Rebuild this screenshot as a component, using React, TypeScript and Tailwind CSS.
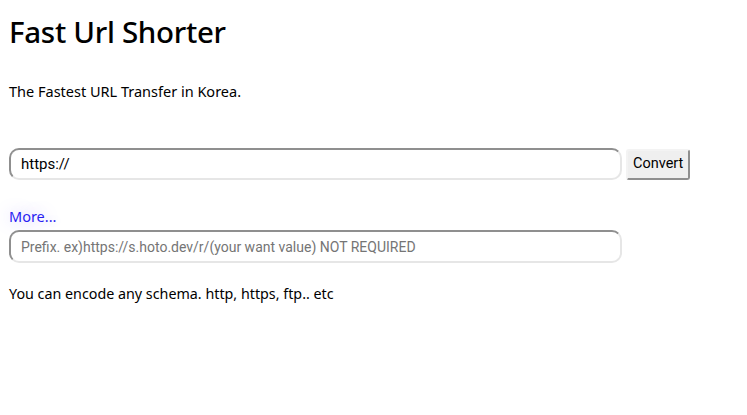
export default function App() {
  return (
    <div className="min-h-[415px] bg-white px-[9px] text-black [font-family:'Noto_Sans',sans-serif]">
      <h1 className="pt-[14px] text-[29.5px] leading-[36px] font-medium tracking-[-0.3px]">Fast Url Shorter</h1>
      <p className="mt-[32px] text-[14.5px] leading-[18px]">The Fastest URL Transfer in Korea.</p>

      <div className="mt-[48px] flex items-center gap-[4px]">
        <input
          defaultValue="https://"
          className="h-[32px] w-[613px] rounded-[10px] border-2 border-t-[#8f8f8f] border-l-[#8f8f8f] border-r-[#e6e6e6] border-b-[#e6e6e6] bg-white px-[10px] text-[15px] text-black outline-none [font-family:Roboto,sans-serif]"
        />
        <button className="h-[31px] rounded-[3px] border-2 border-t-[#f3f3f3] border-l-[#f3f3f3] border-r-[#8f8f8f] border-b-[#8f8f8f] bg-[#efefef] px-[5px] text-[14.5px] text-black [font-family:Roboto,sans-serif]">
          Convert
        </button>
      </div>

      <div className="mt-[24px]">
        <a className="text-[14.5px] leading-[18px] text-[#2a1ef2] [text-shadow:0_0_16px_rgba(110,90,255,0.4)]">More...</a>
      </div>
      <input
        placeholder="Prefix. ex)https://s.hoto.dev/r/(your want value) NOT REQUIRED"
        className="mt-[2px] h-[33px] w-[613px] rounded-[10px] border-2 border-t-[#8f8f8f] border-l-[#8f8f8f] border-r-[#e6e6e6] border-b-[#e6e6e6] bg-white px-[10px] text-[14px] text-black outline-none placeholder:text-[#757575] [font-family:Roboto,sans-serif]"
      />

      <p className="mt-[22px] text-[14.3px] leading-[18px]">You can encode any schema. http, https, ftp.. etc</p>
    </div>
  );
}
